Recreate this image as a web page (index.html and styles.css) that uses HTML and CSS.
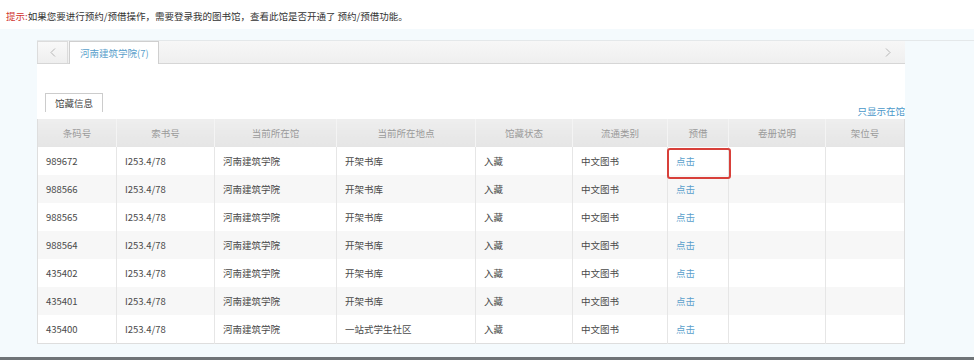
FILE: index.html
```html
<!DOCTYPE html>
<html lang="zh-CN">
<head>
<meta charset="utf-8">
<title>馆藏信息</title>
<link rel="stylesheet" href="styles.css">
</head>
<body>
<div class="tip"><span class="tip-label">提示:</span>如果您要进行预约/预借操作，需要登录我的图书馆，查看此馆是否开通了 预约/预借功能。</div>
<div class="panel">
  <div class="tabbar-wrap">
    <div class="tabbar">
      <span class="nav prev"><svg width="6" height="9" viewBox="0 0 6 9"><polyline points="5,0.5 1,4.5 5,8.5" fill="none" stroke="#b5b5b5" stroke-width="1"/></svg></span>
      <span class="tab">河南建筑学院(7)</span>
      <span class="spacer"></span>
      <span class="nav next"><svg width="6" height="9" viewBox="0 0 6 9"><polyline points="1,0.5 5,4.5 1,8.5" fill="none" stroke="#b5b5b5" stroke-width="1"/></svg></span>
    </div>
  </div>
  <div class="content">
    <div class="toolbar">
      <span class="subtab">馆藏信息</span>
      <a class="filter">只显示在馆</a>
    </div>
    <table class="holdings">
      <colgroup>
        <col class="c1"><col class="c2"><col class="c3"><col class="c4"><col class="c5"><col class="c6"><col class="c7"><col class="c8"><col class="c9">
      </colgroup>
      <thead>
        <tr><th>条码号</th><th>索书号</th><th>当前所在馆</th><th>当前所在地点</th><th>馆藏状态</th><th>流通类别</th><th>预借</th><th>卷册说明</th><th>架位号</th></tr>
      </thead>
      <tbody>
        <tr><td>989672</td><td>I253.4/78</td><td>河南建筑学院</td><td>开架书库</td><td>入藏</td><td>中文图书</td><td class="hl"><a class="link">点击</a><span class="mark"></span></td><td></td><td></td></tr>
        <tr><td>988566</td><td>I253.4/78</td><td>河南建筑学院</td><td>开架书库</td><td>入藏</td><td>中文图书</td><td><a class="link">点击</a></td><td></td><td></td></tr>
        <tr><td>988565</td><td>I253.4/78</td><td>河南建筑学院</td><td>开架书库</td><td>入藏</td><td>中文图书</td><td><a class="link">点击</a></td><td></td><td></td></tr>
        <tr><td>988564</td><td>I253.4/78</td><td>河南建筑学院</td><td>开架书库</td><td>入藏</td><td>中文图书</td><td><a class="link">点击</a></td><td></td><td></td></tr>
        <tr><td>435402</td><td>I253.4/78</td><td>河南建筑学院</td><td>开架书库</td><td>入藏</td><td>中文图书</td><td><a class="link">点击</a></td><td></td><td></td></tr>
        <tr><td>435401</td><td>I253.4/78</td><td>河南建筑学院</td><td>开架书库</td><td>入藏</td><td>中文图书</td><td><a class="link">点击</a></td><td></td><td></td></tr>
        <tr><td>435400</td><td>I253.4/78</td><td>河南建筑学院</td><td>一站式学生社区</td><td>入藏</td><td>中文图书</td><td><a class="link">点击</a></td><td></td><td></td></tr>
      </tbody>
    </table>
  </div>
</div>
</body>
</html>
```

FILE: styles.css
```css
* { box-sizing: border-box; }
html, body { margin: 0; padding: 0; }
body {
  width: 974px;
  height: 360px;
  overflow: hidden;
  background: #ffffff;
  font-family: "Noto Sans CJK SC", "Liberation Sans", sans-serif;
  font-size: 9.5px;
  color: #333;
}
.tip {
  height: 29px;
  padding: 10px 0 0 6px;
  line-height: 12px;
  color: #333;
  white-space: nowrap;
}
.tip-label { color: #d0302c; }

.panel {
  height: 331px;
  background: #f4fafd;
  border-bottom: 3px solid #6f7478;
  padding-top: 11px;
}
.tabbar-wrap {
  margin-left: 37px;
  border-top: 1px solid #e4e8ea;
}
.tabbar {
  width: 868px;
  height: 23px;
  display: flex;
  align-items: stretch;
  background: linear-gradient(#f7f7f7, #efefef);
  border-bottom: 1px solid #d6d6d6;
}
.nav {
  width: 31px;
  display: flex;
  align-items: center;
  justify-content: center;
}
.prev {
  border: 1px solid #dcdcdc;
  border-bottom: none;
  background: linear-gradient(#f9f9f9, #eeeeee);
}
.tab {
  margin-left: 1px;
  padding: 0 9px 0 10px;
  background: #ffffff;
  border: 1px solid #cfcfcf;
  border-bottom: none;
  margin-bottom: -1px;
  color: #5a9fcc;
  line-height: 22px;
}
.spacer { flex: 1; }
.next { width: 34px; }

.content {
  margin-left: 37px;
  width: 868px;
  height: 280px;
  background: #ffffff;
  padding-top: 29px;
}
.toolbar {
  height: 26px;
  display: flex;
  justify-content: space-between;
  align-items: flex-start;
}
.subtab {
  margin-left: 8px;
  height: 19px;
  padding: 0 9px;
  border: 1px solid #cccccc;
  border-bottom: none;
  line-height: 18px;
  color: #444;
}
.filter {
  margin-top: 13px;
  line-height: 11px;
  color: #4a97c9;
  white-space: nowrap;
}
.holdings {
  width: 868px;
  table-layout: fixed;
  border-collapse: collapse;
  border: 1px solid #dedede;
  border-top: none;
}
.c1 { width: 79px; }
.c2 { width: 98px; }
.c3 { width: 122px; }
.c4 { width: 139px; }
.c5 { width: 97px; }
.c6 { width: 95px; }
.c7 { width: 61px; }
.c8 { width: 97px; }
.c9 { width: 79px; }
.holdings th {
  height: 28px;
  padding: 0;
  font-weight: normal;
  color: #9a9a9a;
  text-align: center;
  background: linear-gradient(#eeeeee, #e5e5e5);
  border-left: 1px solid #f4f4f4;
}
.holdings th:first-child { border-left: none; }
.holdings td {
  height: 28px;
  padding: 0 0 0 8px;
  color: #4a4a4a;
  border-left: 1px solid #e6e6e6;
  white-space: nowrap;
}
.holdings td:first-child { border-left: none; }
.holdings tbody tr:nth-child(even) td { background: #f7f7f7; }
.link { color: #5a9fcc; }
.hl { position: relative; }
.mark {
  position: absolute;
  left: -1px;
  top: 1px;
  width: 64px;
  height: 31px;
  border: 2px solid #d8403a;
  border-radius: 3px;
}
```
